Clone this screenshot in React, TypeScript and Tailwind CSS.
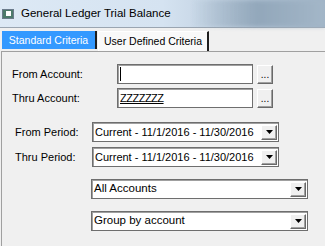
function Caret() {
  return (
    <span className="flex h-[15px] w-[16px] shrink-0 items-center justify-center border border-t-white border-l-white border-r-[#696969] border-b-[#696969] bg-[#f0f0f0] shadow-[inset_-1px_-1px_0_#a0a0a0]">
      <svg width="7" height="4" viewBox="0 0 7 4">
        <path d="M0 0h7L3.5 4z" fill="#000" />
      </svg>
    </span>
  );
}

function Combo({ text, width, size }: { text: string; width: string; size: string }) {
  return (
    <div className={`flex h-[20px] ${width} items-center justify-between border border-[#6e6e6e] bg-white pl-[1px] pr-[1px] shadow-[inset_1px_1px_0_#a0a0a0]`}>
      <span className={`pl-[1px] ${size} leading-none text-black`}>{text}</span>
      <Caret />
    </div>
  );
}

function Browse() {
  return (
    <button className="flex h-[19px] w-[16px] items-end justify-center border border-t-white border-l-white border-r-[#696969] border-b-[#696969] bg-[#f0f0f0] pb-[3px] text-[10px] leading-none text-black shadow-[inset_-1px_-1px_0_#a0a0a0]">
      ...
    </button>
  );
}

export default function App() {
  return (
    <div className="relative h-[246px] w-[325px] overflow-hidden bg-[#f0f0f0] font-['Liberation_Sans',Arial,sans-serif] text-black">
      {/* title bar */}
      <div className="relative flex h-[28px] items-center border-b border-[#9aa5b1] bg-gradient-to-r from-[#dde9f5] via-[#d5e3f1] to-[#9fb3c6]">
        <div className="absolute right-0 top-0 h-full w-[135px] bg-gradient-to-r from-transparent via-[#8aa0b4] to-[#a5b8c9] opacity-80 blur-[2px]" />
        <div className="relative ml-[2px] flex h-[10px] w-[12px] items-center border border-[#6b7b8b] bg-[#4d7a6b]">
          <div className="ml-[3px] h-[5px] w-[5px] bg-white" />
        </div>
        <span className="relative ml-[7px] text-[11.5px] leading-none">General Ledger Trial Balance</span>
      </div>

      {/* tabs */}
      <div className="flex h-[23px] items-end pl-[2px]">
        <div className="mb-[2px] flex h-[18px] w-[95px] items-center justify-center border-r-2 border-r-[#1e1e1e] bg-[#3399ff] text-[10.5px] leading-none text-white">
          Standard Criteria
        </div>
        <div className="ml-[1px] flex h-[20px] w-[111px] items-center justify-center border-l border-r-2 border-t border-l-white border-r-[#1e1e1e] border-t-white bg-[#f9f9f9] text-[10.5px] leading-none">
          User Defined Criteria
        </div>
      </div>

      {/* panel */}
      <div className="ml-[1px] h-full border-l border-t border-[#a0a0a0] pl-[10px] pt-[12px] text-[11px]">
        <div className="flex flex-col gap-[4px]">
          <div className="flex items-center">
            <span className="w-[105px]">From Account:</span>
            <div className="flex h-[20px] w-[136px] items-center border border-[#6e6e6e] bg-white pl-[2px] shadow-[inset_1px_1px_0_#a0a0a0]">
              <span className="h-[14px] w-[1px] bg-black" />
            </div>
            <div className="ml-[4px]">
              <Browse />
            </div>
          </div>
          <div className="flex items-center">
            <span className="w-[105px]">Thru Account:</span>
            <div className="flex h-[20px] w-[136px] items-center border border-[#6e6e6e] bg-white pl-[2px] shadow-[inset_1px_1px_0_#a0a0a0]">
              <span className="text-[11px] leading-none tracking-[-0.5px] underline">ZZZZZZZ</span>
            </div>
            <div className="ml-[4px]">
              <Browse />
            </div>
          </div>
        </div>

        <div className="mt-[14px] flex flex-col gap-[5px] pl-[3px]">
          <div className="flex items-center">
            <span className="w-[77px]">From Period:</span>
            <Combo text="Current - 11/1/2016 - 11/30/2016" width="w-[187px]" size="text-[11px]" />
          </div>
          <div className="flex items-center">
            <span className="w-[77px]">Thru Period:</span>
            <Combo text="Current - 11/1/2016 - 11/30/2016" width="w-[187px]" size="text-[11px]" />
          </div>
        </div>

        <div className="mt-[12px] flex flex-col gap-[12px] pl-[79px]">
          <Combo text="All Accounts" width="w-[217px]" size="text-[11.5px]" />
          <Combo text="Group by account" width="w-[217px]" size="text-[11.5px]" />
        </div>
      </div>
    </div>
  );
}
